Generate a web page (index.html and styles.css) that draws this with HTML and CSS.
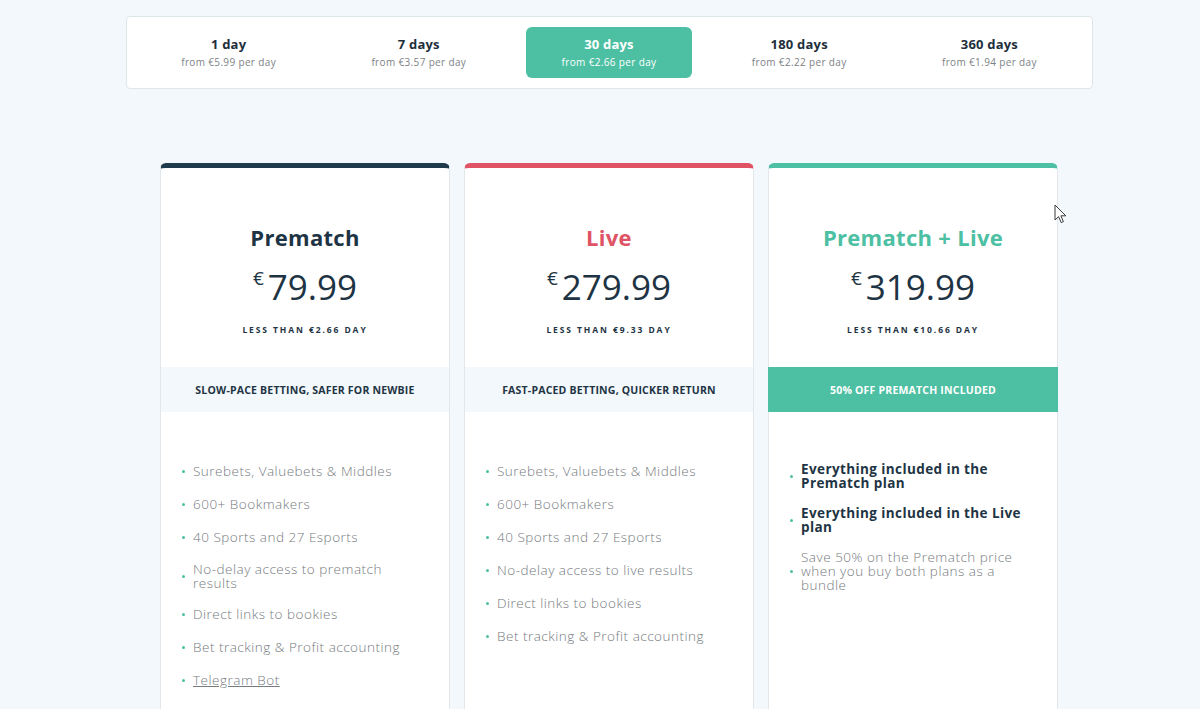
FILE: index.html
```html
<!DOCTYPE html>
<html lang="en">
<head>
<meta charset="utf-8">
<title>Pricing</title>
<link rel="stylesheet" href="styles.css">
</head>
<body>
<div class="page">
  <div class="tabs">
    <div class="tab"><div class="tab-title">1 day</div><div class="tab-sub">from €5.99 per day</div></div>
    <div class="tab"><div class="tab-title">7 days</div><div class="tab-sub">from €3.57 per day</div></div>
    <div class="tab active"><div class="tab-title">30 days</div><div class="tab-sub">from €2.66 per day</div></div>
    <div class="tab"><div class="tab-title">180 days</div><div class="tab-sub">from €2.22 per day</div></div>
    <div class="tab"><div class="tab-title">360 days</div><div class="tab-sub">from €1.94 per day</div></div>
  </div>

  <div class="cards">
    <div class="card card-dark">
      <div class="card-head">
        <h2 class="plan-name">Prematch</h2>
        <div class="price"><span class="cur">€</span><span class="amount">79.99</span></div>
        <div class="per-day">LESS THAN €2.66 DAY</div>
      </div>
      <div class="band">SLOW-PACE BETTING, SAFER FOR NEWBIE</div>
      <ul class="features">
        <li>Surebets, Valuebets &amp; Middles</li>
        <li>600+ Bookmakers</li>
        <li>40 Sports and 27 Esports</li>
        <li class="wrap">No-delay access to prematch results</li>
        <li>Direct links to bookies</li>
        <li>Bet tracking &amp; Profit accounting</li>
        <li><a class="link" href="#">Telegram Bot</a></li>
      </ul>
    </div>

    <div class="card card-red">
      <div class="card-head">
        <h2 class="plan-name">Live</h2>
        <div class="price"><span class="cur">€</span><span class="amount">279.99</span></div>
        <div class="per-day">LESS THAN €9.33 DAY</div>
      </div>
      <div class="band">FAST-PACED BETTING, QUICKER RETURN</div>
      <ul class="features">
        <li>Surebets, Valuebets &amp; Middles</li>
        <li>600+ Bookmakers</li>
        <li>40 Sports and 27 Esports</li>
        <li>No-delay access to live results</li>
        <li>Direct links to bookies</li>
        <li>Bet tracking &amp; Profit accounting</li>
      </ul>
    </div>

    <div class="card card-teal">
      <div class="card-head">
        <h2 class="plan-name">Prematch + Live</h2>
        <div class="price"><span class="cur">€</span><span class="amount">319.99</span></div>
        <div class="per-day">LESS THAN €10.66 DAY</div>
      </div>
      <div class="band">50% OFF PREMATCH INCLUDED</div>
      <ul class="features bundle">
        <li class="strong">Everything included in the Prematch plan</li>
        <li class="strong">Everything included in the Live plan</li>
        <li>Save 50% on the Prematch price when you buy both plans as a bundle</li>
      </ul>
    </div>
  </div>
</div>
<svg class="cursor" width="14" height="22" viewBox="0 0 14 22" aria-hidden="true">
  <path d="M1 1 L1 16 L4.6 12.6 L7.2 18.6 L9.4 17.6 L6.9 11.8 L11.8 11.8 Z" fill="#ffffff" stroke="#3a3a3a" stroke-width="1" stroke-linejoin="round"/>
</svg>
</body>
</html>
```
FILE: styles.css
```css
* { box-sizing: border-box; }
html, body { margin: 0; padding: 0; }
body {
  background: #f2f8fb;
  font-family: "Open Sans", "Noto Sans", "Liberation Sans", sans-serif;
  color: #1e3444;
  height: 709px;
  overflow: hidden;
}
.page {
  padding: 16px 0 0 18px;
  display: flex;
  flex-direction: column;
  align-items: center;
}
.tabs {
  width: 967px;
  height: 73px;
  background: #ffffff;
  border: 1px solid #dfe6ea;
  border-radius: 4px;
  padding: 10px 7px;
  display: grid;
  grid-template-columns: repeat(5, 1fr);
}
.tab {
  display: flex;
  flex-direction: column;
  align-items: center;
  justify-content: center;
  margin: 0 12px;
  border-radius: 6px;
}
.tab.active { background: #4dbfa3; }
.tab-title {
  font-size: 13px;
  font-weight: 700;
  color: #1e2f3c;
  line-height: 18px;
  letter-spacing: 0.2px;
  margin-top: -1px;
}
.tab-sub {
  font-size: 10px;
  color: #7d8286;
  line-height: 14px;
  margin-top: 2px;
  letter-spacing: 0.35px;
}
.tab.active .tab-title, .tab.active .tab-sub { color: #ffffff; }

.cards {
  margin-top: 74px;
  display: flex;
  gap: 14px;
}
.card {
  width: 290px;
  min-height: 560px;
  background: #ffffff;
  border: 1px solid #e1e7eb;
  border-top: 5px solid #1f3a4a;
  border-radius: 6px 6px 0 0;
  display: flex;
  flex-direction: column;
}
.card-red { border-top-color: #e05365; }
.card-teal { border-top-color: #4dbfa3; }
.card-head {
  padding-top: 54px;
  height: 199px;
  display: flex;
  flex-direction: column;
  align-items: center;
}
.plan-name {
  margin: 0;
  font-size: 22px;
  font-weight: 700;
  line-height: 31px;
  letter-spacing: 0.3px;
  color: #1e3444;
}
.card-red .plan-name { color: #e05365; }
.card-teal .plan-name { color: #4dbfa3; }
.price {
  margin-top: 13px;
  display: flex;
  align-items: flex-start;
  line-height: 42px;
  color: #1e3444;
}
.cur {
  font-size: 19px;
  line-height: 20px;
  margin-right: 4px;
  margin-top: 2px;
}
.amount {
  font-size: 35px;
  font-weight: 400;
}
.per-day {
  margin-top: 15px;
  font-size: 8.5px;
  font-weight: 700;
  letter-spacing: 1.9px;
  line-height: 14px;
  color: #1e3444;
}
.band {
  height: 45px;
  background: #f2f8fb;
  display: flex;
  align-items: center;
  justify-content: center;
  font-size: 10.5px;
  font-weight: 700;
  letter-spacing: 0.2px;
  color: #1e3444;
}
.card-teal .band { background: #4dbfa3; color: #ffffff; margin: 0 -1px; }
.features {
  list-style: none;
  margin: 0;
  padding: 52px 36px 0 32px;
  font-size: 13.5px;
  font-weight: 300;
  letter-spacing: 0.5px;
  color: #767b80;
}
.features li {
  position: relative;
  line-height: 14px;
  margin-bottom: 19px;
}
.features li.wrap { margin-top: -1px; margin-bottom: 17px; }
.features li::before {
  content: "";
  position: absolute;
  left: -11px;
  top: 50%;
  width: 3px;
  height: 3px;
  margin-top: -1px;
  border-radius: 50%;
  background: #4dbfa3;
}
.features.bundle { padding-top: 50px; }
.features.bundle li { margin-bottom: 16px; }
.features li.strong {
  font-weight: 700;
  letter-spacing: 0.4px;
  color: #1e3444;
}
.link { color: #767b80; text-decoration: underline; }
.cursor {
  position: absolute;
  left: 1054px;
  top: 204px;
}
```
